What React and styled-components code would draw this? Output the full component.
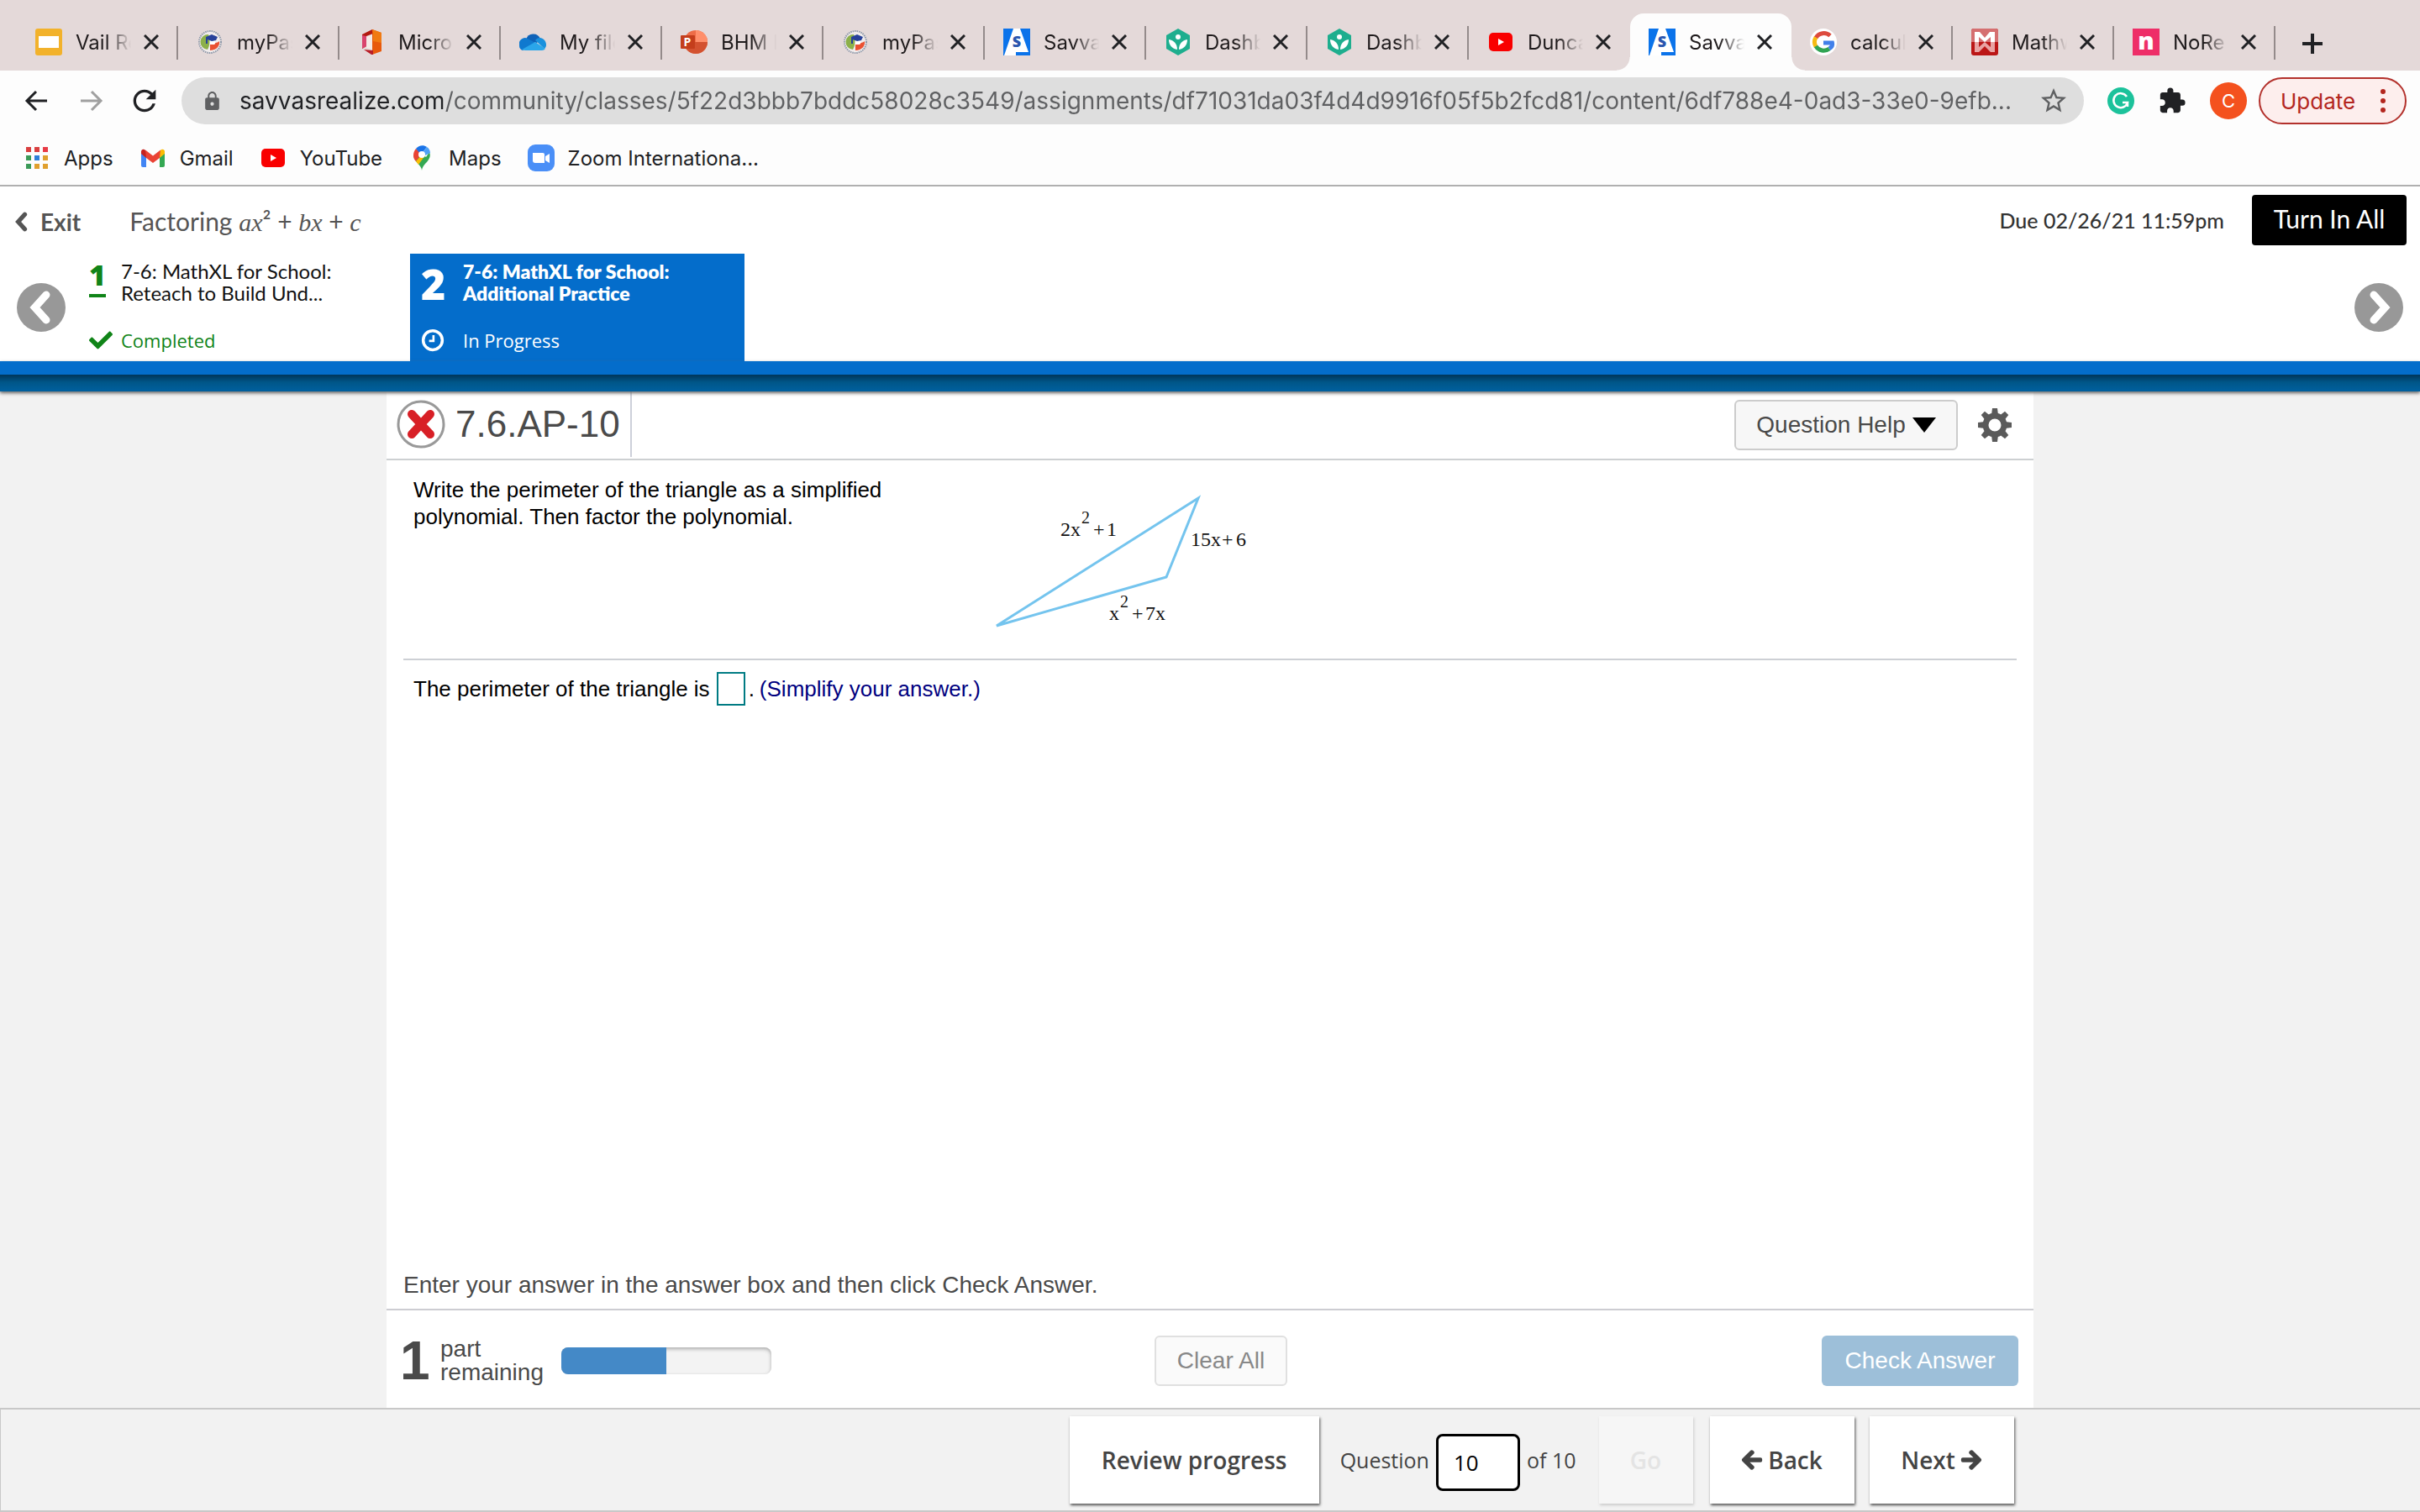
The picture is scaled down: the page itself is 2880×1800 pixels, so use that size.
import React, { useState } from "react";
import styled, { createGlobalStyle } from "styled-components";
import { FaArrowLeft, FaArrowRight, FaCheck } from "react-icons/fa";
import { MdExtension, MdLock, MdRefresh, MdStarBorder } from "react-icons/md";

const GlobalStyle = createGlobalStyle`
  * {
    box-sizing: border-box;
  }

  body {
    margin: 0;
    background: #f2f2f2;
  }

  button, input {
    font: inherit;
    color: inherit;
    margin: 0;
    padding: 0;
    border: none;
    background: none;
  }

  button {
    cursor: pointer;
  }

  a {
    color: inherit;
    text-decoration: none;
  }

  svg {
    display: block;
    flex: none;
  }
`;

const ui = `Inter, "Noto Sans", sans-serif`;
const arial = `"Liberation Sans", Arial, sans-serif`;
const lato = `Lato, sans-serif`;
const openSans = `"Open Sans", "Noto Sans", sans-serif`;

const Page = styled.div`
  min-height: 100vh;
  display: flex;
  flex-direction: column;
`;

/* ---------- browser chrome ---------- */

const TabStrip = styled.div`
  display: flex;
  align-items: flex-end;
  height: 84px;
  padding: 16px 20px 0;
  background: #e4d9d9;
  font-family: ${ui};
  font-size: 24px;
  color: #1f1b1c;
`;

const TabBox = styled.div`
  position: relative;
  flex: 0 1 192px;
  min-width: 0;
  height: 68px;
  display: flex;
  align-items: center;
  padding-left: 22px;
  border-radius: ${(props) => (props.$active ? "16px 16px 0 0" : "0")};
  background: ${(props) => (props.$active ? "#fdfdfd" : "transparent")};

  &::after {
    content: "";
    display: ${(props) => (props.$divider ? "block" : "none")};
    position: absolute;
    right: 0;
    top: 15px;
    width: 2px;
    height: 40px;
    background: #948b8b;
  }
`;

const Flare = styled.span`
  position: absolute;
  bottom: 0;
  ${(props) => props.$side}: -16px;
  width: 16px;
  height: 16px;
  background: radial-gradient(
    circle at ${(props) => props.$side} top,
    transparent 15px,
    #fdfdfd 16px
  );
`;

const TabTitle = styled.span`
  width: 66px;
  margin-left: 16px;
  white-space: nowrap;
  mask-image: linear-gradient(to right, #000 55%, transparent 100%);
`;

const IconButton = styled.button`
  display: flex;
  align-items: center;
  justify-content: center;
  width: ${(props) => props.$size || 32}px;
  height: ${(props) => props.$size || 32}px;
  color: ${(props) => props.$color || "#202124"};
`;

const CloseButton = styled(IconButton)`
  margin-left: 8px;
`;

const SettingsButton = styled(IconButton)`
  margin-left: 22px;
`;

const NewTabButton = styled(IconButton)`
  margin: 0 0 16px 28px;
`;

const Toolbar = styled.div`
  display: flex;
  align-items: center;
  height: 72px;
  padding: 0 16px 0 28px;
  background: #fdfdfd;
  font-family: ${ui};
`;

const NavButtons = styled.div`
  display: flex;
  gap: 32px;
  margin-right: 28px;
`;

const AddressBar = styled.div`
  flex: 1;
  display: flex;
  align-items: center;
  height: 56px;
  padding: 0 20px 0 24px;
  border-radius: 28px;
  background: #dedede;
  color: #5f6062;
`;

const AddressInput = styled.input`
  flex: 1;
  min-width: 0;
  margin-left: 20px;
  height: 40px;
  font-size: 28px;
  color: transparent;
  background: linear-gradient(to right, #202124 242px, #5f6062 242px);
  background-clip: text;
  outline: none;
`;

const Extensions = styled.div`
  display: flex;
  align-items: center;
  gap: 24px;
  margin: 0 14px 0 28px;
`;

const Avatar = styled.button`
  width: 44px;
  height: 44px;
  border-radius: 50%;
  background: #f4511e;
  color: #fff;
  font-size: 22px;
`;

const UpdateButton = styled.button`
  display: flex;
  align-items: center;
  justify-content: space-between;
  width: 176px;
  height: 56px;
  padding: 0 22px 0 24px;
  border: 2px solid #b3312c;
  border-radius: 28px;
  background: #fdeeed;
  color: #b3261e;
  font-size: 26px;
`;

const Bookmarks = styled.nav`
  display: flex;
  align-items: center;
  gap: 31px;
  height: 66px;
  padding: 0 28px;
  border-bottom: 2px solid #b0b0b0;
  background: #fdfdfd;
  font-family: ${ui};
  font-size: 24px;
  color: #202124;
`;

const Bookmark = styled.a`
  display: flex;
  align-items: center;
  gap: 16px;
`;

/* ---------- assignment header ---------- */

const Header = styled.header`
  background: #fff;
  font-family: ${lato};
`;

const TitleRow = styled.div`
  display: flex;
  align-items: center;
  height: 80px;
  padding: 0 16px 0 12px;
  color: #555;
  font-size: 28px;
`;

const ExitLink = styled.a`
  display: flex;
  align-items: center;
  gap: 8px;
  padding-top: 4px;
  margin-right: 58px;
  font-weight: 700;
`;

const Lesson = styled.h1`
  margin: 0;
  padding-top: 4px;
  flex: 1;
  font-size: 30px;
  line-height: 36px;
  font-weight: 400;

  i {
    font-family: "Liberation Serif", serif;
  }
`;

const Due = styled.span`
  margin-right: 33px;
  color: #333;
  font-size: 25px;
  font-weight: 500;
`;

const TurnInButton = styled.button`
  width: 184px;
  height: 60px;
  padding-bottom: 4px;
  border-radius: 4px;
  background: #000;
  color: #fff;
  font-size: 30px;
`;

const Carousel = styled.div`
  display: flex;
  align-items: center;
  height: 128px;
  padding: 0 20px;
`;

const RoundArrow = styled.button`
  display: flex;
  align-items: center;
  justify-content: center;
  width: 58px;
  height: 58px;
  border-radius: 50%;
  background: #989898;
`;

const Steps = styled.div`
  flex: 1;
  display: flex;
  gap: 12px;
  padding-left: 12px;
`;

const Step = styled.a`
  display: grid;
  grid-template-columns: ${(props) => (props.$active ? "50px" : "38px")} 1fr;
  grid-template-rows: 70px 1fr;
  width: ${(props) => (props.$active ? 398 : 386)}px;
  height: 128px;
  padding: ${(props) => (props.$active ? "8px 12px 0 13px" : "8px 16px 0")};
  background: ${(props) => (props.$active ? "#046dcb" : "transparent")};
  color: ${(props) => (props.$active ? "#fff" : "#111")};
  font-size: 24px;
  line-height: 26px;
`;

const StepNumber = styled.span`
  justify-self: start;
  font-family: ${openSans};
  font-weight: 800;
  font-size: ${(props) => (props.$active ? 50 : 34)}px;
  line-height: ${(props) => (props.$active ? 56 : 34)}px;
  height: ${(props) => (props.$active ? "auto" : "44px")};
  border-bottom: ${(props) => (props.$active ? "none" : "4px solid")};
  color: ${(props) => (props.$active ? "#fff" : "#108418")};
`;

const StepTitle = styled.span`
  font-size: ${(props) => (props.$active ? 23 : 24)}px;
  font-weight: ${(props) => (props.$active ? 800 : 400)};
`;

const StepStatus = styled.span`
  font-family: ${openSans};
  font-size: 22px;
  font-weight: 500;
  line-height: 50px;
  color: ${(props) => (props.$done ? "#108418" : "#fff")};
`;

const StepIcon = styled.span`
  align-self: start;
  height: 50px;
  display: flex;
  align-items: center;
  color: #108418;
`;

const Band = styled.div`
  position: relative;
  height: 36px;
  border-top: 16px solid #046dcb;
  background: linear-gradient(#00355a, #005688 45%, #00609f);
  box-shadow: 0 2px 4px #666;
`;

/* ---------- question ---------- */

const Panel = styled.main`
  flex: 1;
  display: flex;
  flex-direction: column;
  width: 100%;
  max-width: 1960px;
  margin: 0 auto;
  background: #fff;
  color: #4a4a4a;
  font-family: ${arial};
  font-size: 28px;
`;

const PanelHead = styled.div`
  display: flex;
  align-items: center;
  height: 82px;
  padding: 0 24px 0 12px;
  border-bottom: 2px solid #cdd0d2;
`;

const QuestionId = styled.h2`
  display: flex;
  align-items: center;
  gap: 12px;
  height: 78px;
  margin: 0 auto 0 0;
  padding-right: 12px;
  border-right: 2px solid #cdd0da;
  align-self: flex-start;
  font-size: 44px;
  font-weight: 400;
`;

const OutlineButton = styled.button`
  display: flex;
  align-items: center;
  justify-content: center;
  gap: 8px;
  width: ${(props) => props.$width}px;
  height: 60px;
  border: 2px solid #ccc;
  border-radius: 6px;
  background: #f7f7f7;

  &:disabled {
    border-color: #e0e0e0;
    background: #fafafa;
    color: #888;
  }
`;

const PrimaryButton = styled(OutlineButton)`
  justify-self: end;

  &:disabled {
    border: none;
    background: #9dbfd9;
    color: #fff;
  }
`;

const Problem = styled.section`
  display: flex;
  gap: 108px;
  margin: 0 20px;
  padding: 19px 12px 0;
  min-height: 238px;
  border-bottom: 2px solid #cdd0d5;
  color: #000;
  font-size: 26px;
  line-height: 32px;
`;

const Prompt = styled.p`
  margin: 0;
  width: 572px;
`;

const Work = styled.section`
  flex: 1;
  padding: 14px 32px;
  color: #000;
  font-size: 26px;
  line-height: 40px;
`;

const AnswerRow = styled.div`
  display: flex;
  align-items: center;
  gap: 4px;
`;

const AnswerInput = styled.input`
  width: 34px;
  height: 40px;
  margin-left: 4px;
  border: 2px solid #007b83;
  background: #fff;
  text-align: center;
`;

const Note = styled.span`
  margin-left: 2px;
  color: #000080;
`;

const Hint = styled.p`
  margin: 0;
  padding: 0 20px 12px;
  line-height: 32px;
  border-bottom: 2px solid #cdcdd2;
`;

const PanelFoot = styled.div`
  display: grid;
  grid-template-columns: 898px auto 1fr;
  align-items: center;
  height: 116px;
  padding: 4px 18px 0 16px;
`;

const Remaining = styled.div`
  display: flex;
  align-items: center;
  line-height: 28px;
`;

const RemainingCount = styled.b`
  width: 48px;
  font-size: 64px;
`;

const RemainingLabel = styled.span`
  width: 144px;
`;

const Track = styled.div`
  width: 250px;
  height: 32px;
  border-radius: 8px;
  overflow: hidden;
  background: #f3f3f3;
  box-shadow: inset 0 2px 4px #aaa;
`;

const Fill = styled.div`
  height: 100%;
  background: #4489c7;
`;

/* ---------- bottom bar ---------- */

const BottomBar = styled.footer`
  border: 2px solid #c8c8c8;
  border-width: 2px 0 2px 1px;
  background: #f2f2f2;
  color: #444;
  font-family: ${openSans};
  font-size: 25px;
`;

const BottomInner = styled.div`
  display: flex;
  align-items: center;
  justify-content: flex-end;
  max-width: 1960px;
  height: 120px;
  margin: 0 auto;
  padding-right: 24px;
`;

const NavButton = styled.button`
  display: flex;
  align-items: center;
  justify-content: center;
  gap: 6px;
  width: ${(props) => props.$width}px;
  height: 104px;
  margin-left: ${(props) => props.$gap || 0}px;
  background: #fff;
  box-shadow: 1px 2px 3px #555;
  font-size: 28px;
  font-weight: 600;

  svg {
    stroke: currentColor;
    stroke-width: 30px;
    overflow: visible;
  }

  &:disabled {
    background: #f6f6f6;
    box-shadow: 1px 2px 3px #ccc;
    color: #e4e4e4;
  }
`;

const Jump = styled.label`
  display: flex;
  align-items: center;
  gap: 8px;
  margin-left: 25px;
`;

const JumpInput = styled.input`
  width: 100px;
  height: 68px;
  margin-top: 6px;
  padding-left: 18px;
  border: 3px solid #000;
  border-radius: 8px;
  background: #fff;
  color: #000;
  font-size: 26px;
`;

/* ---------- icons ---------- */

const Icon = ({ children, size = 32, box = 32 }) => (
  <svg width={size} height={size} viewBox={`0 0 ${box} ${box}`} aria-hidden="true">
    {children}
  </svg>
);

const SlidesIcon = () => (
  <Icon>
    <rect width="32" height="32" rx="3" fill="#f2b22b" />
    <rect x="4" y="9" width="24" height="14" fill="#fff" />
  </Icon>
);

const DistrictIcon = () => (
  <Icon>
    <circle cx="16" cy="16" r="13" fill="#f1ecec" stroke="#8b97a8" strokeWidth="2" strokeDasharray="1.5 1" />
    <path d="M14 7a9 9 0 0 0-1 18c3-5 3-12 1-18z" fill="#8cb04a" />
    <path d="M16 26c8 0 12-6 11-11-3 3-8 2-11 4z" fill="#ea5132" />
    <path d="M16 14h5a3 3 0 0 1 0 5h-5z" fill="#fff" />
    <path d="M11 10l7-3 7 3-2 4-5 1-5-2v5h-2z" fill="#27419a" />
  </Icon>
);

const OfficeIcon = () => (
  <Icon>
    <path d="M17 1L5 7v17l5-3V9l8-3z" fill="#b21a10" />
    <path d="M5 8l5 1v12l-5 3z" fill="#d9436d" />
    <path d="M17 1l11 4v22l-11 4z" fill="#e8590c" />
    <path d="M18 6l-1-5 11 4v12l-10-2z" fill="#f07a12" />
    <path d="M7 25l11 1v5l-2 0z" fill="#b91d26" />
    <path d="M10 10l7-3v18l-7-2z" fill="#f4e9e6" />
  </Icon>
);

const OneDriveIcon = () => (
  <Icon>
    <path d="M8 13a9 9 0 0 1 17-1l-4 5-12-2z" fill="#0f62b8" />
    <path d="M0 20a7 7 0 0 1 10-8l11 6-17 8a6 6 0 0 1-4-6z" fill="#0f79cf" />
    <path d="M19 14a7 7 0 0 1 6-3c5 1 7 5 7 8a6 6 0 0 1-2 5z" fill="#1890dd" />
    <path d="M3 25l16-9 12 8a5 5 0 0 1-4 2H7z" fill="#2aa6ea" />
  </Icon>
);

const PowerPointIcon = () => (
  <Icon>
    <circle cx="18" cy="16" r="14" fill="#ed6c47" />
    <path d="M18 2a14 14 0 0 1 14 14H18z" fill="#ff8f6b" />
    <path d="M32 16a14 14 0 0 1-28 0z" fill="#d35230" />
    <rect y="8" width="17" height="16" rx="1" fill="#c43e1c" />
    <text x="8" y="21" textAnchor="middle" fontFamily={openSans} fontWeight="700" fontSize="14" fill="#fff">P</text>
  </Icon>
);

const SavvasIcon = () => (
  <Icon>
    <rect width="32" height="32" fill="#0b73ea" />
    <path d="M12 0h8l10 28H15v4H1z" fill="#fff" />
    <text x="16" y="22" textAnchor="middle" fontFamily={openSans} fontWeight="800" fontSize="18" fill="#2b56ae">S</text>
  </Icon>
);

const DashboardIcon = () => (
  <Icon>
    <path d="M16 0l14 8v16l-14 8-14-8V8z" fill="#1eae8e" />
    <circle cx="16" cy="10" r="3" fill="#fff" />
    <path d="M15 25c-6-1-10-5-10-12 6 1 10 5 10 12z" fill="#fff" />
    <path d="M17 25c6-1 10-5 10-12-6 1-10 5-10 12z" fill="#fff" />
  </Icon>
);

const YouTubeIcon = () => (
  <Icon>
    <rect x="2" y="5" width="28" height="22" rx="5" fill="#f90000" />
    <path d="M13 12l7 4-7 4z" fill="#fff" />
  </Icon>
);

const GoogleIcon = () => (
  <Icon>
    <circle cx="16" cy="16" r="16" fill="#fff" />
    <g fill="none" strokeWidth="5">
      <path d="M24 8.500a11 11 0 0 0-17 2.500" stroke="#dd4b3e" />
      <path d="M7 10.500a11 11 0 0 0 0 11" stroke="#f6bb12" />
      <path d="M7 21a11 11 0 0 0 16 3" stroke="#31a453" />
      <path d="M23 24c3-2 4-5 3.500-7H16" stroke="#4280ea" />
    </g>
  </Icon>
);

const MathIcon = () => (
  <Icon>
    <rect width="32" height="32" rx="3" fill="#bb1616" />
    <path d="M3 0h26a3 3 0 0 1 3 3v13H0V3a3 3 0 0 1 3-3z" fill="#d56f70" />
    <path d="M4 16V4h6l6 7 6-7h6v12h-5v-6l-7 6-7-6v6z" fill="#fff" />
    <path d="M4 28V16h5v6l7-6 7 6v-6h5v12h-5l-7-7-7 7z" fill="#e9a3a3" />
  </Icon>
);

const NoRedInkIcon = () => (
  <Icon>
    <rect width="32" height="32" fill="#ee2e68" />
    <text x="16" y="25" textAnchor="middle" fontFamily={openSans} fontWeight="800" fontSize="29" fill="#fff">n</text>
  </Icon>
);

const AppsIcon = () => (
  <Icon>
    {["#d94040", "#d94040", "#e83b46", "#3b9a58", "#2f7fd8", "#e0a02f", "#3b9a58", "#e0a02f", "#e0a02f"].map((fill, i) => (
      <rect key={i} x={3 + (i % 3) * 10} y={3 + Math.floor(i / 3) * 10} width="6" height="6" fill={fill} />
    ))}
  </Icon>
);

const GmailIcon = () => (
  <Icon>
    <path d="M2 9v16a2 2 0 0 0 2 2h4V13z" fill="#4285f4" />
    <path d="M30 9v16a2 2 0 0 1-2 2h-4V13z" fill="#34a853" />
    <path d="M2 8v3l6 5V8L6 6a3 3 0 0 0-4 2z" fill="#c5221f" />
    <path d="M30 8v3l-6 5V8l2-2a3 3 0 0 1 4 2z" fill="#fbbc04" />
    <path d="M7 6.500l9 7 9-7-1 9.500-8 6-8-6z" fill="#ea4335" />
  </Icon>
);

const MapsIcon = () => (
  <Icon>
    <path d="M16 31c0-6-9-10-10-18l6-6 9 8 4-6c4 10-8 13-9 22z" fill="#34a853" />
    <path d="M6 13c0-3 1-6 3-8l7 6-7 9c-2-2-3-4-3-7z" fill="#ea4335" />
    <path d="M9 5c3-4 9-5 13-2l-7 9z" fill="#1a73e8" />
    <path d="M22 3c2 1 4 4 4 7l-8 4-2-3z" fill="#4fa1f5" />
    <path d="M9 20l9-10 2 3-8 11z" fill="#fbbc04" />
    <circle cx="16" cy="12" r="4" fill="#fff" />
  </Icon>
);

const ZoomIcon = () => (
  <Icon>
    <rect width="32" height="32" rx="9" fill="#4a8ff7" />
    <path d="M6 10h12a2 2 0 0 1 2 2v10H9a3 3 0 0 1-3-3z" fill="#fff" />
    <path d="M21 14l5-3v11l-5-3z" fill="#fff" />
  </Icon>
);

const GrammarlyIcon = () => (
  <Icon>
    <circle cx="16" cy="16" r="16" fill="#1cc29b" />
    <path d="M23 11a8.500 8.500 0 1 0 1 7h-6M24 17v6" fill="none" stroke="#fff" strokeWidth="2.500" />
  </Icon>
);

const ArrowIcon = ({ flip }) => (
  <Icon>
    <path
      d={flip ? "M4 16h24M17 5l11 11-11 11" : "M28 16H4M15 5L4 16l11 11"}
      fill="none"
      stroke="currentColor"
      strokeWidth="3"
    />
  </Icon>
);

const Chevron = ({ flip, size, color }) => (
  <svg width={size} height={size} viewBox="0 0 32 32" aria-hidden="true">
    <path
      d={flip ? "M12 6l9 10-9 10" : "M20 6l-9 10 9 10"}
      fill="none"
      stroke={color}
      strokeWidth="6"
      strokeLinecap="round"
    />
  </svg>
);

const WrongMark = () => (
  <Icon size={58} box={58}>
    <circle cx="29" cy="29" r="27" fill="#fff" stroke="#999" strokeWidth="3" />
    <path d="M18 17l22 24M40 17L18 41" stroke="#d81f26" strokeWidth="10" strokeLinecap="round" />
  </Icon>
);

const GearIcon = () => (
  <Icon size={44} box={44}>
    <circle cx="22" cy="22" r="11" fill="none" stroke="currentColor" strokeWidth="7" />
    {[0, 45, 90, 135, 180, 225, 270, 315].map((angle) => (
      <path key={angle} d="M18 10l1-8h6l1 8z" fill="currentColor" transform={`rotate(${angle} 22 22)`} />
    ))}
  </Icon>
);

const Triangle = () => (
  <svg width="320" height="180" viewBox="0 0 320 180" role="img" aria-label="Triangle with sides 2x²+1, 15x+6 and x²+7x">
    <path d="M14 178L254 26l-38 94z" fill="none" stroke="#74c4ee" strokeWidth="3" />
    <g fontFamily="Liberation Serif, serif" fontSize="24" fill="#111">
      <text x="90" y="71">2x</text>
      <text x="115" y="56" fontSize="20">2</text>
      <text x="129" y="71">+</text>
      <text x="145" y="71">1</text>
      <text x="245" y="83">15x</text>
      <text x="282" y="83">+</text>
      <text x="299" y="83">6</text>
      <text x="148" y="171">x</text>
      <text x="161" y="156" fontSize="20">2</text>
      <text x="175" y="171">+</text>
      <text x="191" y="171">7x</text>
    </g>
  </svg>
);

const tabs = [
  { title: "Vail Re", icon: SlidesIcon },
  { title: "myPas", icon: DistrictIcon },
  { title: "Micro", icon: OfficeIcon },
  { title: "My file", icon: OneDriveIcon },
  { title: "BHM I", icon: PowerPointIcon },
  { title: "myPas", icon: DistrictIcon },
  { title: "Savva", icon: SavvasIcon },
  { title: "Dashb", icon: DashboardIcon },
  { title: "Dashb", icon: DashboardIcon },
  { title: "Dunca", icon: YouTubeIcon },
  { title: "Savva", icon: SavvasIcon, active: true },
  { title: "calcul", icon: GoogleIcon },
  { title: "Mathw", icon: MathIcon },
  { title: "NoRe", icon: NoRedInkIcon },
];

const bookmarks = [
  { title: "Apps", icon: AppsIcon },
  { title: "Gmail", icon: GmailIcon },
  { title: "YouTube", icon: YouTubeIcon },
  { title: "Maps", icon: MapsIcon },
  { title: "Zoom Internationa...", icon: ZoomIcon },
];

const address =
  "savvasrealize.com/community/classes/5f22d3bbb7bddc58028c3549/assignments/df71031da03f4d4d9916f05f5b2fcd81/content/6df788e4-0ad3-33e0-9efb...";

function BrowserChrome() {
  return (
    <div>
      <TabStrip>
        {tabs.map((tab, i) => (
          <TabBox key={i} $active={tab.active} $divider={!tab.active && i !== 9}>
            {tab.active && <Flare $side="left" />}
            {tab.active && <Flare $side="right" />}
            <tab.icon />
            <TabTitle>{tab.title}</TabTitle>
            <CloseButton aria-label="Close tab">
              <svg width="18" height="18" viewBox="0 0 18 18">
                <path d="M1 1l16 16M17 1L1 17" stroke="currentColor" strokeWidth="3" />
              </svg>
            </CloseButton>
          </TabBox>
        ))}
        <NewTabButton aria-label="New tab">
          <svg width="26" height="26" viewBox="0 0 26 26">
            <path d="M13 1v24M1 13h24" stroke="currentColor" strokeWidth="4" />
          </svg>
        </NewTabButton>
      </TabStrip>
      <Toolbar>
        <NavButtons>
          <IconButton aria-label="Back"><ArrowIcon /></IconButton>
          <IconButton aria-label="Forward" $color="#a0a0a0"><ArrowIcon flip /></IconButton>
          <IconButton aria-label="Reload"><MdRefresh size={40} /></IconButton>
        </NavButtons>
        <AddressBar>
          <MdLock size={25} />
          <AddressInput aria-label="Address" defaultValue={address} />
          <IconButton aria-label="Bookmark this page" $color="#5f6062"><MdStarBorder size={36} /></IconButton>
        </AddressBar>
        <Extensions>
          <IconButton aria-label="Grammarly"><GrammarlyIcon /></IconButton>
          <IconButton aria-label="Extensions" $size={42}><MdExtension size={34} /></IconButton>
          <Avatar aria-label="Profile">C</Avatar>
        </Extensions>
        <UpdateButton>
          Update
          <svg width="8" height="30" viewBox="0 0 8 30" fill="currentColor">
            <circle cx="4" cy="4" r="3" />
            <circle cx="4" cy="15" r="3" />
            <circle cx="4" cy="26" r="3" />
          </svg>
        </UpdateButton>
      </Toolbar>
      <Bookmarks>
        {bookmarks.map((item) => (
          <Bookmark key={item.title} href="#">
            <item.icon />
            {item.title}
          </Bookmark>
        ))}
      </Bookmarks>
    </div>
  );
}

function AssignmentHeader() {
  return (
    <Header>
      <TitleRow>
        <ExitLink href="#"><Chevron size={28} color="#555" /> Exit</ExitLink>
        <Lesson>
          Factoring <i>ax</i>² + <i>bx</i> + <i>c</i>
        </Lesson>
        <Due>Due 02/26/21 11:59pm</Due>
        <TurnInButton>Turn In All</TurnInButton>
      </TitleRow>
      <Carousel>
        <RoundArrow aria-label="Previous"><Chevron size={48} color="#fff" /></RoundArrow>
        <Steps>
          <Step href="#">
            <StepNumber>1</StepNumber>
            <StepTitle>7-6: MathXL for School:<br />Reteach to Build Und...</StepTitle>
            <StepIcon><FaCheck size={28} /></StepIcon>
            <StepStatus $done>Completed</StepStatus>
          </Step>
          <Step href="#" $active>
            <StepNumber $active>2</StepNumber>
            <StepTitle $active>7-6: MathXL for School:<br />Additional Practice</StepTitle>
            <StepIcon>
              <Icon size={28}>
                <circle cx="16" cy="16" r="13" fill="none" stroke="#fff" strokeWidth="4" />
                <path d="M17 9v8h-6" fill="none" stroke="#fff" strokeWidth="3" />
              </Icon>
            </StepIcon>
            <StepStatus>In Progress</StepStatus>
          </Step>
        </Steps>
        <RoundArrow aria-label="Next"><Chevron flip size={48} color="#fff" /></RoundArrow>
      </Carousel>
      <Band />
    </Header>
  );
}

function Question() {
  const [answer, setAnswer] = useState("");

  return (
    <Panel>
      <PanelHead>
        <QuestionId><WrongMark />7.6.AP-10</QuestionId>
        <OutlineButton $width={266}>
          Question Help
          <svg width="28" height="18" viewBox="0 0 28 18"><path d="M0 0h28L14 18z" /></svg>
        </OutlineButton>
        <SettingsButton aria-label="Settings" $size={44} $color="#5a5a5a">
          <GearIcon />
        </SettingsButton>
      </PanelHead>
      <Problem>
        <Prompt>Write the perimeter of the triangle as a simplified polynomial. Then factor the polynomial.</Prompt>
        <Triangle />
      </Problem>
      <Work>
        <AnswerRow>
          <label htmlFor="perimeter">The perimeter of the triangle is</label>
          <AnswerInput id="perimeter" value={answer} onChange={(e) => setAnswer(e.target.value)} />
          <span>.</span>
          <Note>(Simplify your answer.)</Note>
        </AnswerRow>
      </Work>
      <Hint>Enter your answer in the answer box and then click Check Answer.</Hint>
      <PanelFoot>
        <Remaining>
          <RemainingCount>1</RemainingCount>
          <RemainingLabel>part<br />remaining</RemainingLabel>
          <Track><Fill style={{ width: `${(1 / 2) * 100}%` }} /></Track>
        </Remaining>
        <OutlineButton $width={158} disabled>Clear All</OutlineButton>
        <PrimaryButton $width={234} disabled>Check Answer</PrimaryButton>
      </PanelFoot>
    </Panel>
  );
}

function App() {
  const [number, setNumber] = useState("10");

  return (
    <Page>
      <GlobalStyle />
      <BrowserChrome />
      <AssignmentHeader />
      <Question />
      <BottomBar>
        <BottomInner>
          <NavButton $width={297}>Review progress</NavButton>
          <Jump>
            Question
            <JumpInput value={number} onChange={(e) => setNumber(e.target.value)} />
            of 10
          </Jump>
          <NavButton $width={112} $gap={27} disabled>Go</NavButton>
          <NavButton $width={172} $gap={20}><FaArrowLeft size={26} />Back</NavButton>
          <NavButton $width={172} $gap={18}>Next<FaArrowRight size={26} /></NavButton>
        </BottomInner>
      </BottomBar>
    </Page>
  );
}

export default App;
